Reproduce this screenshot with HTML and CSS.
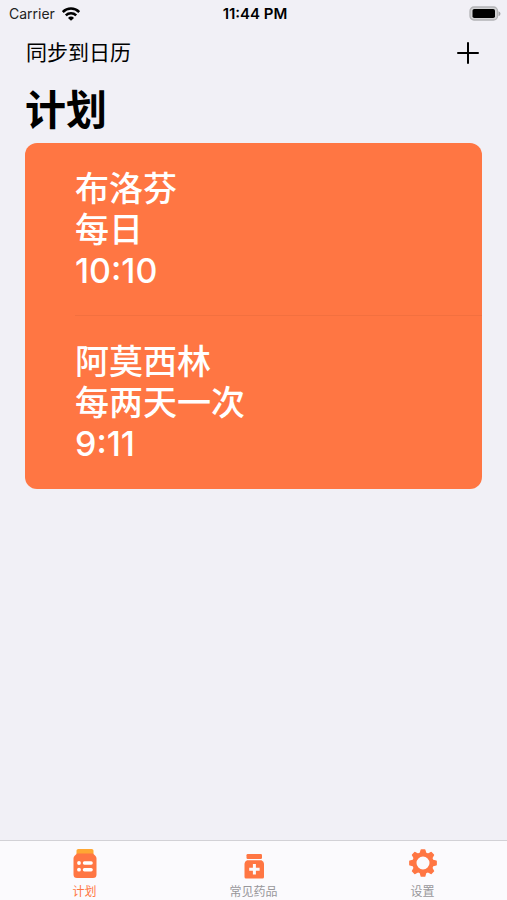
FILE: index.html
```html
<!DOCTYPE html>
<html lang="zh-CN">
<head>
<meta charset="utf-8">
<meta name="viewport" content="width=device-width, initial-scale=1">
<title>计划</title>
<link rel="stylesheet" href="styles.css">
</head>
<body>
<div class="status">
  <div class="carrier">
    <span>Carrier</span>
    <svg width="18" height="14" viewBox="0 0 18 14" fill="none" stroke="#000" stroke-width="2.5" aria-hidden="true">
      <path d="M.8 5a11.600 11.600 0 0 1 16.400 0"/>
      <path d="M3.800 8.400a7.400 7.400 0 0 1 10.400 0"/>
      <path d="M9 13.700 6 10.900a4 4 0 0 1 6 0z" fill="#000" stroke="none"/>
    </svg>
  </div>
  <time class="clock">11:44 PM</time>
  <div class="battery">
    <svg width="32" height="15" viewBox="0 0 32 15" aria-hidden="true">
      <path d="M29.5 5.2v5q2-.8 2-2.500t-2-2.500z" fill="#a3a3a6"/>
      <rect x="1" y="1" width="27.500" height="13" rx="4" fill="#d2d2d4" stroke="#b3b3b6" stroke-width="1.300"/>
      <rect x="3.500" y="3" width="22.500" height="9" rx="1.800" fill="#000"/>
    </svg>
  </div>
</div>
<header class="nav">
  <button class="sync" type="button">同步到日历</button>
  <button class="add" type="button" aria-label="添加">
    <svg width="22" height="22" viewBox="0 0 22 22" stroke="#000" stroke-width="2" stroke-linecap="round" aria-hidden="true"><path d="M11 1v20M1 11h20"/></svg>
  </button>
</header>
<main class="content">
  <h1 class="title">计划</h1>
  <ul class="plans">
    <li class="plan">
      <div class="details">
        <h2 class="line">布洛芬</h2>
        <p class="line">每日</p>
        <p class="line">10:10</p>
      </div>
    </li>
    <li class="plan">
      <div class="details">
        <h2 class="line">阿莫西林</h2>
        <p class="line">每两天一次</p>
        <p class="line">9:11</p>
      </div>
    </li>
  </ul>
</main>
<nav class="tabs">
  <a class="tab active" href="#plan">
    <svg width="32" height="32" viewBox="0 0 32 32" aria-hidden="true">
      <path d="M7.500 7V3.800Q7.500 2 9.300 2h13.400q1.800 0 1.800 1.800V7z" fill="#ffa733"/>
      <path d="M8 6.400h16l2.300 2.300q1.200 1.100 1.200 2.800v16q0 3.500-3.500 3.500H8q-3.500 0-3.500-3.500v-16q0-1.700 1.200-2.800z" fill="#ff7643"/>
      <g fill="#fff"><circle cx="10" cy="16" r="1.900"/><circle cx="10" cy="22.700" r="1.900"/><rect x="13.800" y="14.300" width="10" height="3.400" rx="1.600"/><rect x="13.800" y="21" width="10" height="3.400" rx="1.600"/></g>
    </svg>
    <span>计划</span>
  </a>
  <a class="tab" href="#medicines">
    <svg width="32" height="32" viewBox="0 0 32 32" fill="#ff7643" aria-hidden="true">
      <rect x="8.500" y="7" width="15.500" height="5" rx="1.200"/>
      <path fill-rule="evenodd" d="M9 13.200h14.500q2.500 1 2.500 3.500V30q0 1.500-1.500 1.500H8q-1.500 0-1.500-1.500V16.700q0-2.500 2.500-3.500zM14.900 17v3.700h-3.700v3h3.700v3.700h3v-3.700h3.700v-3h-3.700V17z"/>
    </svg>
    <span>常见药品</span>
  </a>
  <a class="tab" href="#settings">
    <svg width="32" height="32" viewBox="0 0 32 32" aria-hidden="true">
      <g fill="#ff7643" stroke="#ff7643" stroke-width="1.500" stroke-linejoin="round">
        <path id="teeth" d="M13.200 7 14.300 2.900h3.400L18.800 7zM13.200 25l1.100 4.100h3.400l1.100-4.100zM7 13.200 2.900 14.300v3.400L7 18.800zM25 13.200l4.100 1.100v3.400L25 18.800z"/>
        <use href="#teeth" transform="rotate(45 16 16)"/>
      </g>
      <circle cx="16" cy="16" r="8.600" fill="none" stroke="#ff7643" stroke-width="4.200"/>
    </svg>
    <span>设置</span>
  </a>
</nav>
</body>
</html>
```
FILE: styles.css
```css
* {
  box-sizing: border-box;
}

body {
  margin: 0;
  min-height: 100vh;
  display: flex;
  flex-direction: column;
  background: #f1f0f6;
  color: #000;
  font-family: Inter, "Noto Sans CJK SC", sans-serif;
}

h1, h2, p, ul {
  margin: 0;
  padding: 0;
}

button {
  border: 0;
  padding: 0;
  background: none;
  color: inherit;
  font: inherit;
  cursor: pointer;
}

svg {
  display: block;
}

.status {
  display: grid;
  grid-template-columns: 1fr auto 1fr;
  align-items: center;
  height: 27px;
  padding: 0 6px 0 9px;
  font-size: 14px;
}

.carrier {
  display: flex;
  align-items: center;
  gap: 7px;
  color: #222;
}

.clock {
  font-size: 15px;
  font-weight: 600;
}

.battery {
  justify-self: end;
}

.nav {
  display: flex;
  align-items: center;
  justify-content: space-between;
  height: 52px;
  padding: 0 28px 0 26px;
}

.sync {
  font-size: 21px;
  line-height: 30px;
}

.content {
  flex: 1;
  padding: 0 25px;
}

.title {
  padding-top: 2px;
  font-size: 41px;
  line-height: 58px;
  font-weight: 700;
  margin-bottom: 4px;
}

.plans {
  list-style: none;
  background: #ff7643;
  color: #fff;
  border-radius: 12px;
  overflow: hidden;
}

.plan {
  padding-left: 50px;
}

.details {
  padding: 25px 16px 25px 0;
}

.plan:not(:last-child) .details {
  box-shadow: inset 0 -1px #f3703f;
}

.line {
  font-size: 34px;
  line-height: 41px;
  font-weight: 500;
}

.tabs {
  display: grid;
  grid-template-columns: repeat(3, 1fr);
  height: 60px;
  border-top: 1px solid #d2d1d6;
  background: #fbfafd;
}

.tab {
  display: flex;
  flex-direction: column;
  align-items: center;
  gap: 3px;
  padding-top: 6px;
  color: #98979b;
  font-size: 12px;
  line-height: 20px;
  text-decoration: none;
}

.active {
  color: #ff7643;
}
```
